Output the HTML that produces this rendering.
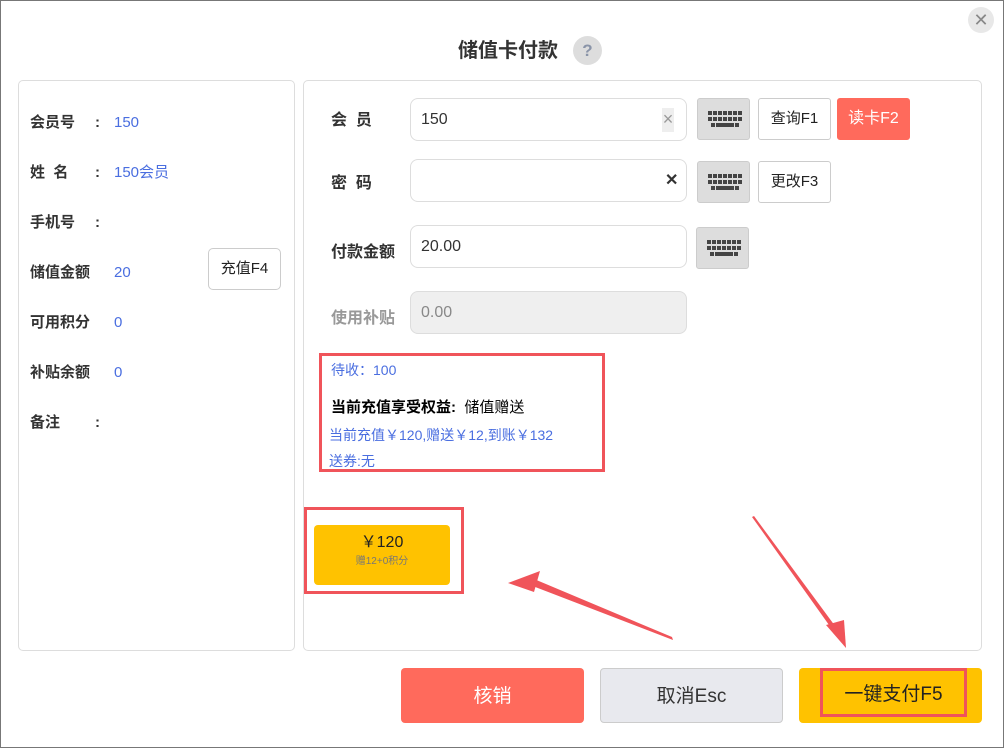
<!DOCTYPE html>
<html><head><meta charset="utf-8"><style>
*{box-sizing:border-box;margin:0;padding:0}
body{width:1004px;height:748px;background:#fff;font-family:"Liberation Sans","Noto Sans CJK SC",sans-serif;position:relative;overflow:hidden;border:1px solid #777}
.a{position:absolute}
.panel{position:absolute;border:1px solid #ddd;border-radius:5px;background:#fff}
.lab,.val,.colon,.rl{line-height:20px;height:20px;white-space:nowrap}
.lab{position:absolute;left:29px;font-size:15px;font-weight:bold;color:#333}
.val{position:absolute;left:113px;font-size:15px;color:#4a6ee0}
.colon{position:absolute;left:94px;font-size:15px;font-weight:bold;color:#333}
.rl{position:absolute;left:330px;font-size:16px;font-weight:bold;color:#333}
.inp{position:absolute;left:409px;width:277px;height:43px;border:1px solid #ddd;border-radius:8px;font-size:16px;color:#333;padding-left:10px;line-height:41px}
.kb{position:absolute;width:53px;height:42px;background:#ddd;border:1px solid #ccc;border-radius:3px}
.kb svg{position:absolute;left:9px;top:10px}
.btn{position:absolute;height:42px;border:1px solid #ccc;border-radius:3px;font-size:15px;color:#222;text-align:center;line-height:40px;background:#fff}
.big{position:absolute;top:667px;width:183px;height:55px;border-radius:4px;text-align:center;line-height:57px;font-size:19px}
</style></head><body>
<div class="a" style="left:457px;top:37px;font-size:20px;font-weight:bold;color:#333;line-height:26px">储值卡付款</div>
<div class="a" style="left:572px;top:35px;width:29px;height:29px;border-radius:50%;background:#ddd;color:#8a94a8;font-weight:bold;text-align:center;line-height:29px;font-size:17px">?</div>
<div class="a" style="left:967px;top:6px;width:26px;height:26px;border-radius:50%;background:#e8e8e8;color:#888;text-align:center;line-height:26px;font-size:18px">✕</div>

<div class="panel" style="left:17px;top:79px;width:277px;height:571px"></div>
<div class="lab" style="top:112px">会员号</div><div class="colon" style="top:112px">:</div><div class="val" style="top:112px">150</div>
<div class="lab" style="top:162px">姓&nbsp;&nbsp;名</div><div class="colon" style="top:162px">:</div><div class="val" style="top:162px">150会员</div>
<div class="lab" style="top:212px">手机号</div><div class="colon" style="top:212px">:</div>
<div class="lab" style="top:262px">储值金额</div><div class="val" style="top:262px">20</div>
<div class="btn" style="left:207px;top:247px;width:73px;height:42px;border-radius:5px">充值F4</div>
<div class="lab" style="top:312px">可用积分</div><div class="val" style="top:312px">0</div>
<div class="lab" style="top:362px">补贴余额</div><div class="val" style="top:362px">0</div>
<div class="lab" style="top:412px">备注</div><div class="colon" style="top:412px">:</div>

<div class="panel" style="left:302px;top:79px;width:679px;height:571px"></div>
<div class="rl" style="top:110px">会&nbsp;&nbsp;员</div>
<div class="inp" style="top:97px">150<span class="a" style="left:251px;top:9px;width:12px;height:24px;background:#eee;color:#999;font-size:18px;line-height:22px;text-align:center">×</span></div>
<div class="kb" style="left:696px;top:97px"><svg width="36" height="22"><g fill="#444"><rect x="1" y="2" width="34" height="4"/><rect x="1" y="8" width="34" height="4"/><rect x="4" y="14" width="28" height="4"/></g><g fill="#ddd"><rect x="5" y="2" width="1" height="10"/><rect x="10" y="2" width="1" height="10"/><rect x="15" y="2" width="1" height="10"/><rect x="20" y="2" width="1" height="10"/><rect x="25" y="2" width="1" height="10"/><rect x="30" y="2" width="1" height="10"/><rect x="8" y="14" width="1" height="4"/><rect x="27" y="14" width="1" height="4"/></g></svg></div>
<div class="btn" style="left:757px;top:97px;width:73px">查询F1</div>
<div class="btn" style="left:836px;top:97px;width:73px;background:#ff6a5c;border-color:#ff6a5c;color:#fff;font-size:16px">读卡F2</div>

<div class="rl" style="top:173px">密&nbsp;&nbsp;码</div>
<div class="inp" style="top:158px"><span class="a" style="left:254px;top:0;color:#333;font-weight:bold;font-size:16px;line-height:41px">✕</span></div>
<div class="kb" style="left:696px;top:160px"><svg width="36" height="22"><g fill="#444"><rect x="1" y="2" width="34" height="4"/><rect x="1" y="8" width="34" height="4"/><rect x="4" y="14" width="28" height="4"/></g><g fill="#ddd"><rect x="5" y="2" width="1" height="10"/><rect x="10" y="2" width="1" height="10"/><rect x="15" y="2" width="1" height="10"/><rect x="20" y="2" width="1" height="10"/><rect x="25" y="2" width="1" height="10"/><rect x="30" y="2" width="1" height="10"/><rect x="8" y="14" width="1" height="4"/><rect x="27" y="14" width="1" height="4"/></g></svg></div>
<div class="btn" style="left:757px;top:160px;width:73px">更改F3</div>

<div class="rl" style="top:242px">付款金额</div>
<div class="inp" style="top:224px">20.00</div>
<div class="kb" style="left:695px;top:226px"><svg width="36" height="22"><g fill="#444"><rect x="1" y="2" width="34" height="4"/><rect x="1" y="8" width="34" height="4"/><rect x="4" y="14" width="28" height="4"/></g><g fill="#ddd"><rect x="5" y="2" width="1" height="10"/><rect x="10" y="2" width="1" height="10"/><rect x="15" y="2" width="1" height="10"/><rect x="20" y="2" width="1" height="10"/><rect x="25" y="2" width="1" height="10"/><rect x="30" y="2" width="1" height="10"/><rect x="8" y="14" width="1" height="4"/><rect x="27" y="14" width="1" height="4"/></g></svg></div>

<div class="rl" style="top:308px;color:#999">使用补贴</div>
<div class="inp" style="top:290px;background:#efefef;color:#888">0.00</div>

<div class="a" style="left:318px;top:352px;width:286px;height:119px;border:3px solid #f0545a"></div>
<div class="a" style="left:330px;top:359px;font-size:14px;color:#4a6ee0;line-height:20px">待收：100</div>
<div class="a" style="left:330px;top:397px;font-size:15px;color:#000;line-height:20px"><b>当前充值享受权益:</b>&nbsp; 储值赠送</div>
<div class="a" style="left:328px;top:424px;font-size:14px;color:#4a6ee0;line-height:20px">当前充值￥120,赠送￥12,到账￥132</div>
<div class="a" style="left:328px;top:450px;font-size:14px;color:#4a6ee0;line-height:20px">送券:无</div>

<div class="a" style="left:303px;top:506px;width:160px;height:87px;border:3px solid #f0545a"></div>
<div class="a" style="left:313px;top:524px;width:136px;height:60px;background:#ffc200;border-radius:4px;text-align:center">
<div style="font-size:16px;color:#222;margin-top:8px;line-height:20px">￥120</div><div style="font-size:10px;color:#777;margin-top:3px;line-height:12px">赠12+0积分</div></div>

<div class="big" style="left:400px;background:#ff6a5c;color:#fff">核销</div>
<div class="big" style="left:599px;background:#e8e9ee;border:1px solid #ccc;color:#333;line-height:55px">取消Esc</div>
<div class="big" style="left:798px;background:#ffc200;color:#222"></div>
<div class="a" style="left:819px;top:667px;width:147px;height:49px;border:3px solid #f0545a;text-align:center;line-height:47px;font-size:19px;color:#222">一键支付F5</div>

<svg class="a" style="left:0;top:0" width="1004" height="748"><g fill="#f0545a">
<polygon points="672,639 529,584 533,578 671,636"/>
<polygon points="507,582 539,570 533,591"/>
<polygon points="751,516 753,515 837,629 833,631"/>
<polygon points="845,647 825,624 843,619"/>
</g></svg>
</body></html>
